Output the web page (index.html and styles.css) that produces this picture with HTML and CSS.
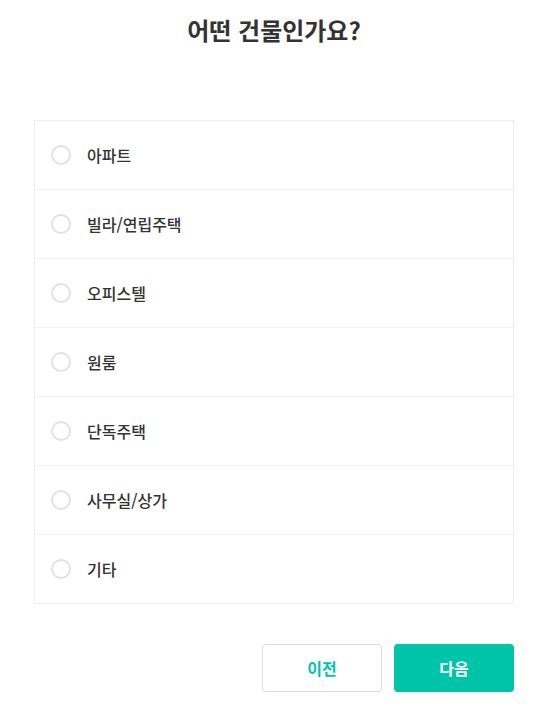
FILE: index.html
```html
<!DOCTYPE html>
<html lang="ko">
<head>
  <meta charset="UTF-8">
  <meta name="viewport" content="width=device-width, initial-scale=1.0">
  <title>어떤 건물인가요?</title>
  <link rel="stylesheet" href="styles.css">
</head>
<body>
  <div class="container">
    <h1>어떤 건물인가요?</h1>
    <form id="building">
      <div class="options">
        <label class="option"><input type="radio" name="type" value="아파트"><span class="dot"></span>아파트</label>
        <label class="option"><input type="radio" name="type" value="빌라"><span class="dot"></span>빌라/연립주택</label>
        <label class="option"><input type="radio" name="type" value="오피스텔"><span class="dot"></span>오피스텔</label>
        <label class="option"><input type="radio" name="type" value="원룸"><span class="dot"></span>원룸</label>
        <label class="option"><input type="radio" name="type" value="단독주택"><span class="dot"></span>단독주택</label>
        <label class="option"><input type="radio" name="type" value="사무실"><span class="dot"></span>사무실/상가</label>
        <label class="option"><input type="radio" name="type" value="기타"><span class="dot"></span>기타</label>
      </div>
      <div class="buttons">
        <button type="button" class="prev">이전</button>
        <button type="submit" class="next">다음</button>
      </div>
    </form>
  </div>
</body>
</html>
```

FILE: styles.css
```css
body {
  margin: 0;
  font-family: "Noto Sans CJK KR", "Noto Sans", sans-serif;
  color: #333;
  background: #fff;
}
.container {
  width: 480px;
  margin-left: 34px;
}
h1 {
  margin: 0;
  padding-top: 12px;
  height: 120px;
  box-sizing: border-box;
  text-align: center;
  font-size: 24px;
  font-weight: 700;
  line-height: 36px;
  color: #333;
}
.options {
  border: 1px solid #eee;
}
.option {
  display: flex;
  align-items: center;
  height: 68px;
  padding-left: 16px;
  font-size: 16px;
  font-weight: 500;
  border-top: 1px solid #f1f1f1;
  cursor: pointer;
}
.option:first-child {
  border-top: none;
}
.option input {
  display: none;
}
.dot {
  width: 16px;
  height: 16px;
  border: 2px solid #e2e2e2;
  border-radius: 50%;
  margin-right: 16px;
}
.option input:checked + .dot {
  border: 6px solid #00c4a7;
  width: 8px;
  height: 8px;
}
.buttons {
  display: flex;
  justify-content: flex-end;
  gap: 12px;
  margin-top: 40px;
}
button {
  width: 120px;
  height: 48px;
  border-radius: 4px;
  font-family: inherit;
  font-size: 16px;
  font-weight: 700;
  cursor: pointer;
}
.prev {
  background: #fff;
  border: 1px solid #dcdcdc;
  color: #00c4a7;
}
.next {
  background: #00c4a7;
  border: none;
  color: #fff;
}
```
